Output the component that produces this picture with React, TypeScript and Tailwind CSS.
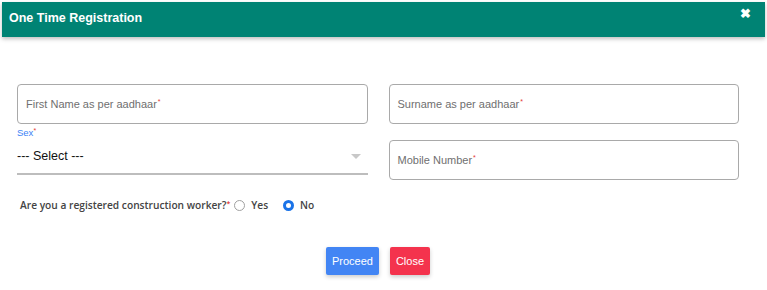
import React, { useState } from "react";

function Field({ label }: { label: string }) {
  return (
    <div className="h-[40px] border border-[#a9a9a9] rounded-[4px] flex items-center px-[8px]">
      <span className="text-[11px] text-[#6f6f6f]">
        {label}
        <sup className="text-[#e53935] text-[7px] ml-px">*</sup>
      </span>
    </div>
  );
}

export default function App() {
  const [worker, setWorker] = useState<"yes" | "no">("no");

  return (
    <div className="w-[767px] h-[290px] bg-white font-[family-name:'Liberation_Sans',Arial,sans-serif] overflow-hidden">
      <div className="mx-[2px] mt-[2px] h-[35px] bg-[#008374] flex items-center justify-between pl-[7px] pr-[14px] shadow-[0_2px_4px_rgba(0,0,0,0.25)]">
        <h1 className="text-white font-bold text-[12.5px] -mt-[3px]">One Time Registration</h1>
        <span className="text-white font-bold text-[13px] leading-none -mt-[12px]">✖</span>
      </div>

      <div className="pl-[17px] pr-[28px] pt-[47px]">
        <div className="grid grid-cols-2 gap-x-[21px]">
          <div>
            <Field label="First Name as per aadhaar" />
            <div className="mt-[3px] text-[9.5px] text-[#3b82f6] leading-[12px]">
              Sex<sup className="text-[#e53935] text-[7px]">*</sup>
            </div>
            <div className="h-[36px] border-b-2 border-[#bdbdbd] flex items-center justify-between pr-[7px]">
              <span className="text-[12.5px] text-[#111]">--- Select ---</span>
              <span className="w-0 h-0 border-l-[5px] border-r-[5px] border-t-[5px] border-l-transparent border-r-transparent border-t-[#c8c8c8]" />
            </div>
          </div>
          <div className="flex flex-col gap-[16px]">
            <Field label="Surname as per aadhaar" />
            <Field label="Mobile Number" />
          </div>
        </div>

        <div className="mt-[18px] ml-[3px] flex items-center font-[family-name:'Open_Sans',sans-serif] font-semibold text-[10.2px] text-[#444]">
          <span>
            Are you a registered construction worker?
            <sup className="text-[#e53935] text-[7px]">*</sup>
          </span>
          <label className="flex items-center ml-[4px] cursor-pointer" onClick={() => setWorker("yes")}>
            <span
              className={
                worker === "yes"
                  ? "w-[11px] h-[11px] rounded-full border-[3px] border-[#1a73e8] bg-white"
                  : "w-[11px] h-[11px] rounded-full border border-[#a0a0a0] bg-white"
              }
            />
            <span className="ml-[6px]">Yes</span>
          </label>
          <label className="flex items-center ml-[15px] cursor-pointer" onClick={() => setWorker("no")}>
            <span
              className={
                worker === "no"
                  ? "w-[11px] h-[11px] rounded-full border-[3px] border-[#1a73e8] bg-white"
                  : "w-[11px] h-[11px] rounded-full border border-[#a0a0a0] bg-white"
              }
            />
            <span className="ml-[6px]">No</span>
          </label>
        </div>

        <div className="mt-[34px] flex justify-center gap-[11px]">
          <button className="h-[28px] px-[6px] bg-[#4285f4] text-white text-[11px] rounded-[2px] shadow-[0_2px_4px_rgba(0,0,0,0.2)]">
            Proceed
          </button>
          <button className="h-[28px] px-[6px] bg-[#f4334d] text-white text-[11px] rounded-[2px] shadow-[0_2px_4px_rgba(0,0,0,0.2)]">
            Close
          </button>
        </div>
      </div>
    </div>
  );
}
